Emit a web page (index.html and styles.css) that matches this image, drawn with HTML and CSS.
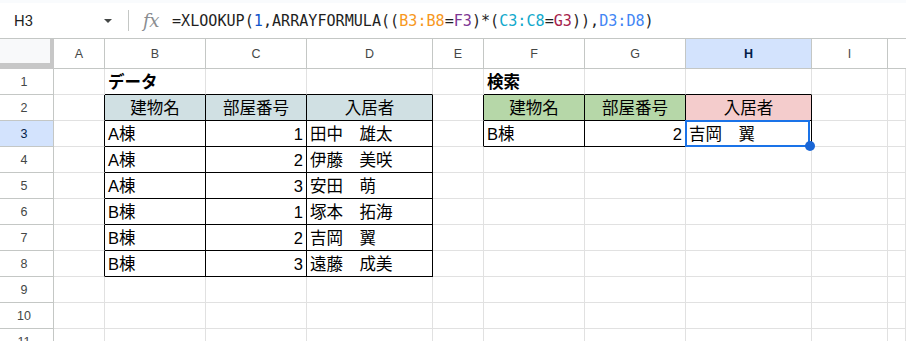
FILE: index.html
```html
<!DOCTYPE html>
<html lang="ja">
<head>
<meta charset="utf-8">
<title>XLOOKUP</title>
<link rel="stylesheet" href="styles.css">
</head>
<body>
<div class="strip"></div>
<div class="fbar">
  <div class="name">H3</div>
  <div class="caret"></div>
  <div class="sep"></div>
  <div class="fx">fx</div>
  <div class="formula">=XLOOKUP(<span class="f1">1</span>,ARRAYFORMULA((<span class="f2">B3:B8</span>=<span class="f3">F3</span>)*(<span class="f4">C3:C8</span>=<span class="f5">G3</span>)),<span class="f6">D3:D8</span>)</div>
</div>
<div class="sheet">
  <div class="corner"></div>
  <div class="ch">A</div><div class="ch">B</div><div class="ch">C</div><div class="ch">D</div><div class="ch">E</div><div class="ch">F</div><div class="ch">G</div><div class="ch selh">H</div><div class="ch">I</div><div class="ch last"></div>

  <div class="rh">1</div>
  <div class="c"></div><div class="c bb bold">データ</div><div class="c bb"></div><div class="c bb"></div><div class="c"></div><div class="c bb bold">検索</div><div class="c bb"></div><div class="c bb"></div><div class="c"></div><div class="c"></div>

  <div class="rh">2</div>
  <div class="c br"></div><div class="c bk ctr hd1">建物名</div><div class="c bk ctr hd1">部屋番号</div><div class="c bk ctr hd1">入居者</div><div class="c br"></div><div class="c bk ctr hdg">建物名</div><div class="c bk ctr hdg">部屋番号</div><div class="c bk ctr hdr">入居者</div><div class="c"></div><div class="c"></div>

  <div class="rh selr">3</div>
  <div class="c br"></div><div class="c bk">A棟</div><div class="c bk num">1</div><div class="c bk">田中　雄太</div><div class="c br"></div><div class="c bk">B棟</div><div class="c bk num">2</div><div class="c bk cur">吉岡　翼<div class="sel"></div><div class="handle"></div></div><div class="c"></div><div class="c"></div>

  <div class="rh">4</div>
  <div class="c br"></div><div class="c bk">A棟</div><div class="c bk num">2</div><div class="c bk">伊藤　美咲</div><div class="c"></div><div class="c"></div><div class="c"></div><div class="c"></div><div class="c"></div><div class="c"></div>

  <div class="rh">5</div>
  <div class="c br"></div><div class="c bk">A棟</div><div class="c bk num">3</div><div class="c bk">安田　萌</div><div class="c"></div><div class="c"></div><div class="c"></div><div class="c"></div><div class="c"></div><div class="c"></div>

  <div class="rh">6</div>
  <div class="c br"></div><div class="c bk">B棟</div><div class="c bk num">1</div><div class="c bk">塚本　拓海</div><div class="c"></div><div class="c"></div><div class="c"></div><div class="c"></div><div class="c"></div><div class="c"></div>

  <div class="rh">7</div>
  <div class="c br"></div><div class="c bk">B棟</div><div class="c bk num">2</div><div class="c bk">吉岡　翼</div><div class="c"></div><div class="c"></div><div class="c"></div><div class="c"></div><div class="c"></div><div class="c"></div>

  <div class="rh">8</div>
  <div class="c br"></div><div class="c bk">B棟</div><div class="c bk num">3</div><div class="c bk">遠藤　成美</div><div class="c"></div><div class="c"></div><div class="c"></div><div class="c"></div><div class="c"></div><div class="c"></div>

  <div class="rh">9</div>
  <div class="c"></div><div class="c"></div><div class="c"></div><div class="c"></div><div class="c"></div><div class="c"></div><div class="c"></div><div class="c"></div><div class="c"></div><div class="c"></div>

  <div class="rh">10</div>
  <div class="c"></div><div class="c"></div><div class="c"></div><div class="c"></div><div class="c"></div><div class="c"></div><div class="c"></div><div class="c"></div><div class="c"></div><div class="c"></div>

  <div class="rh">11</div>
  <div class="c"></div><div class="c"></div><div class="c"></div><div class="c"></div><div class="c"></div><div class="c"></div><div class="c"></div><div class="c"></div><div class="c"></div><div class="c"></div>
</div>
</body>
</html>
```
FILE: styles.css
```css
html, body {
  margin: 0;
  padding: 0;
  background: #ffffff;
  overflow: hidden;
  width: 906px;
  height: 341px;
}

.strip {
  height: 3px;
  background: #f9fbfd;
}

.fbar {
  height: 35px;
  border-bottom: 1px solid #c4c7c5;
  display: flex;
  align-items: center;
  box-sizing: content-box;
}

.name {
  margin-left: 14px;
  width: 90px;
  font-family: Roboto, "Liberation Sans", sans-serif;
  font-size: 15px;
  color: #1f1f1f;
}

.caret {
  width: 0;
  height: 0;
  border-left: 4px solid transparent;
  border-right: 4px solid transparent;
  border-top: 4px solid #444746;
  margin-top: 1px;
}

.sep {
  width: 1px;
  height: 21px;
  background: #c4c7c5;
  margin-left: 16px;
}

.fx {
  margin-left: 14px;
  width: 20px;
  font-family: "DejaVu Serif", "Liberation Serif", serif;
  font-style: italic;
  font-size: 18px;
  color: #8a8d91;
  letter-spacing: -0.5px;
  line-height: 20px;
}

.formula {
  margin-left: 9px;
  font-family: "DejaVu Sans Mono", monospace;
  font-size: 15.1px;
  color: #1f1f1f;
  white-space: nowrap;
}

.f1 { color: #1155cc; }
.f2 { color: #f7981d; }
.f3 { color: #7e3794; }
.f4 { color: #11a9cc; }
.f5 { color: #a61d4c; }
.f6 { color: #4285f4; }

.sheet {
  display: grid;
  grid-template-columns: 54px 51px 101px 101px 126px 51px 101px 101px 126px 76px 1fr;
  grid-template-rows: 30px repeat(11, 26px);
}

.corner {
  background: #f8f9fa;
  border-right: 4px solid #c7c7c7;
  border-bottom: 6px solid #c7c7c7;
  box-sizing: border-box;
}

.ch {
  box-sizing: border-box;
  border-right: 1px solid #c4c7c5;
  border-bottom: 1px solid #c4c7c5;
  display: flex;
  align-items: center;
  justify-content: center;
  font-family: "Liberation Sans", Arial, sans-serif;
  font-size: 12.5px;
  color: #444746;
}

.ch.last {
  border-right: none;
}

.selh {
  background: #d3e3fd;
  color: #041e49;
  font-weight: bold;
}

.rh {
  box-sizing: border-box;
  border-right: 1px solid #c4c7c5;
  border-bottom: 1px solid #c4c7c5;
  display: flex;
  align-items: center;
  justify-content: center;
  padding-right: 5px;
  font-family: "Liberation Sans", Arial, sans-serif;
  font-size: 12.5px;
  color: #444746;
}

.selr {
  background: #d3e3fd;
  color: #041e49;
}

.c {
  box-sizing: border-box;
  border-right: 1px solid #e1e1e1;
  border-bottom: 1px solid #e1e1e1;
  display: flex;
  align-items: flex-end;
  padding: 0 3px 2px 3px;
  font-family: "Liberation Sans", "Noto Sans CJK JP", sans-serif;
  font-size: 16.5px;
  line-height: 20px;
  color: #000000;
  white-space: nowrap;
  overflow: visible;
}

.bb { border-bottom-color: #000000; }
.br { border-right-color: #000000; }
.bk { border-right-color: #000000; border-bottom-color: #000000; }

.bold { font-weight: bold; }
.ctr { justify-content: center; }
.num { justify-content: flex-end; }

.hd1 { background: #d0e0e3; }
.hdg { background: #b6d7a8; }
.hdr { background: #f4cccc; }

.cur {
  position: relative;
}

.sel {
  position: absolute;
  left: -1px;
  top: -1px;
  width: 125px;
  height: 27px;
  border: 2px solid #1a73e8;
  box-sizing: border-box;
}

.handle {
  position: absolute;
  left: 119px;
  top: 20px;
  width: 10px;
  height: 10px;
  border-radius: 50%;
  background: #1a66d6;
}
```
